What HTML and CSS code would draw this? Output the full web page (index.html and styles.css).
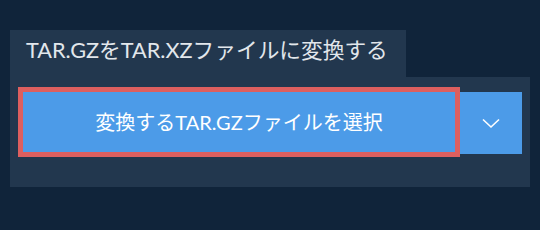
FILE: index.html
```html
<!DOCTYPE html>
<html lang="ja">
<head>
    <meta charset="UTF-8">
    <meta name="viewport" content="width=device-width, initial-scale=1.0">
    <title>TAR.GZをTAR.XZに変換</title>
    <link rel="stylesheet" href="styles.css">
</head>
<body>
    <div class="converter">
        <div class="tab">TAR.GZをTAR.XZファイルに変換する</div>
        <div class="panel">
            <div class="upload-row">
                <button class="choose-btn">変換するTAR.GZファイルを選択</button>
                <button class="drop-btn" aria-label="その他">
                    <svg width="18" height="11" viewBox="0 0 18 11">
                        <polyline points="1,1.5 9,9 17,1.5" fill="none" stroke="#fff" stroke-width="1.6"></polyline>
                    </svg>
                </button>
            </div>
        </div>
    </div>
</body>
</html>
```

FILE: styles.css
```css
body {
    margin: 0;
    background-color: #10243a;
    font-family: Lato, "Noto Sans CJK JP", sans-serif;
    height: 230px;
    overflow: hidden;
}

.converter {
    padding: 30px 0 0 10px;
}

.tab {
    width: 380px;
    height: 47px;
    padding-left: 16px;
    background-color: #22374e;
    color: #e2e7ec;
    font-size: 21.7px;
    line-height: 40px;
}

.panel {
    width: 504px;
    height: 90px;
    padding: 10px 8px;
    background-color: #22374e;
}

.upload-row {
    display: flex;
    align-items: flex-start;
}

.choose-btn {
    box-sizing: border-box;
    width: 442px;
    height: 70px;
    border: 5px solid #dd5f5f;
    background-color: #4c9be8;
    color: #fff;
    font-family: inherit;
    font-size: 20px;
    padding: 0 0 2px 0;
    cursor: pointer;
}

.drop-btn {
    width: 62px;
    height: 62px;
    margin-top: 5px;
    border: none;
    background-color: #4c9be8;
    display: flex;
    align-items: center;
    justify-content: center;
    padding: 0;
    cursor: pointer;
}
```
